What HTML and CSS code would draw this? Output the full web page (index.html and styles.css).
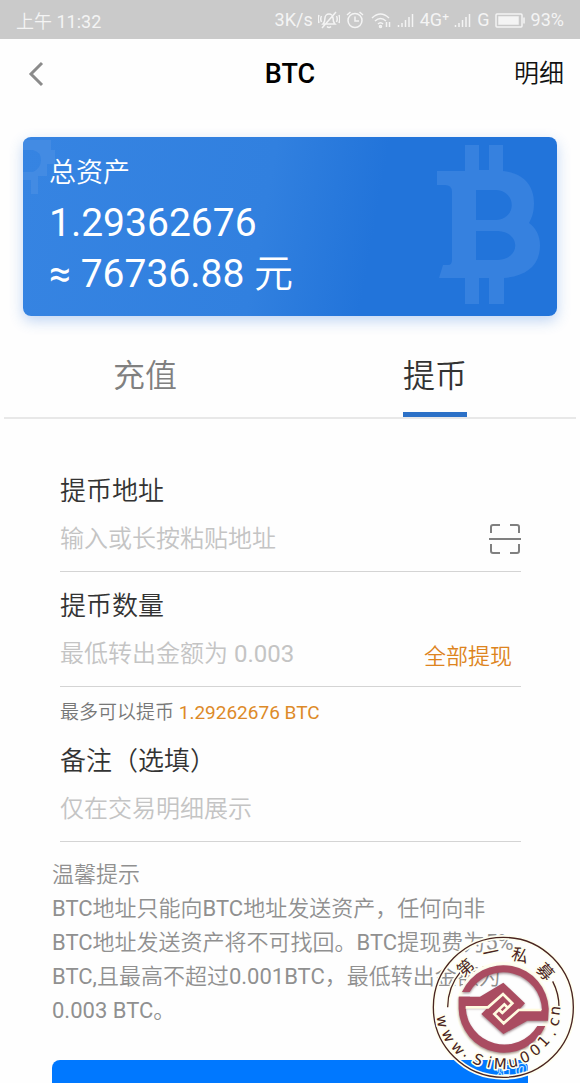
FILE: index.html
```html
<!DOCTYPE html>
<html lang="zh-CN">
<head>
<meta charset="utf-8">
<meta name="viewport" content="width=device-width, initial-scale=1">
<title>BTC</title>
<link rel="stylesheet" href="styles.css">
</head>
<body>
<div class="screen">
  <div class="status">
    <span class="status-time">上午 11:32</span>
    <div class="status-right">
      <span>3K/s</span>
      <svg class="ico" width="22" height="20" viewBox="0 0 22 20"><path d="M5 14c2-2 2-4 2-6a4 4 0 0 1 8 0c0 2 0 4 2 6zM9 16.500q2 2 4 0M4 18 18 2M3.500 6q-1.500 3 0 6M1 5q-1.500 4 0 8M18.500 6q1.500 3 0 6M21 5q1.500 4 0 8"/></svg>
      <svg class="ico" width="20" height="20" viewBox="0 0 20 20"><circle cx="10" cy="10.500" r="7"/><path d="M10 6.500v4.500h4M2 5l3.500-3M18 5l-3.500-3"/></svg>
      <svg class="ico" width="22" height="20" viewBox="0 0 22 20"><path d="M2 8q8.500-8 17 0M5 11q5.500-5 11 0M8 14q2.500-2.500 5 0M16.500 12v5M19.500 12v5"/><circle cx="10.500" cy="16.500" r="1"/></svg>
      <svg class="ico" width="18" height="20" viewBox="0 0 18 20"><path d="M1.500 15v2M5 13v4M8.500 10v7M12 7v10M15.500 4v13"/></svg>
      <span>4G⁺</span>
      <svg class="ico" width="18" height="20" viewBox="0 0 18 20"><path d="M1.500 15v2M5 13v4M8.500 10v7M12 7v10M15.500 4v13"/></svg>
      <span>G</span>
      <svg class="ico" width="31" height="20" viewBox="0 0 31 20"><rect x="1" y="4" width="26" height="13" rx="1"/><rect x="4" y="7" width="19" height="7" fill="#f4f4f4"/><path d="M29 7.500v6"/></svg>
      <span>93%</span>
    </div>
  </div>

  <header class="bar">
    <button class="back" aria-label="返回"><svg width="16" height="26" viewBox="0 0 16 26"><path d="M14 2 3 13l11 11" fill="none" stroke="#8b8b8b" stroke-width="3"/></svg></button>
    <h1 class="title">BTC</h1>
    <a class="detail" href="#detail">明细</a>
  </header>

  <section class="card">
    <svg class="coin" width="104" height="160" viewBox="0 0 104 160" aria-hidden="true"><path fill-rule="evenodd" d="M28 0h14v25h10V0h14v26c20 2 31 14 31 32 0 11-3 16-5 20 7 5 11 13 11 22 0 21-14 31-36 33v26H52v-26H42v26H28v-26H2l4-13h5q4 0 4-5V47q0-7-7-7H0V26h28zM39 45v30h20c21-1 21-29 0-30zM39 86v29h22c23-1 23-28 0-29z"/></svg>
    <svg class="coin-edge" width="34" height="58" viewBox="0 0 34 58" aria-hidden="true"><path d="M0 3h28v10h4v14h-8v12h-9v18H8V43H0V35h10q8-4 8-12t-8-10H0z"/></svg>
    <p class="card-label">总资产</p>
    <p class="amount">1.29362676</p>
    <p class="amount">≈ 76736.88 元</p>
  </section>

  <nav class="tabs">
    <button class="tab">充值</button>
    <button class="tab tab-on">提币</button>
  </nav>

  <form class="form">
    <div class="field">
      <label class="label" for="address">提币地址</label>
      <div class="row">
        <input class="input" id="address" type="text" placeholder="输入或长按粘贴地址">
        <button class="scan" type="button" aria-label="扫描"><svg width="32" height="32" viewBox="0 0 32 32"><path d="M2 10V4q0-2 2-2h7M21 2h7q2 0 2 2v6M2 21v7q0 2 2 2h7M21 30h7q2 0 2-2v-7M0 16h32" fill="none" stroke="#808080" stroke-width="2"/></svg></button>
      </div>
    </div>
    <div class="field">
      <label class="label" for="quantity">提币数量</label>
      <div class="row">
        <input class="input" id="quantity" type="text" placeholder="最低转出金额为 0.003">
        <button class="all" type="button">全部提现</button>
      </div>
    </div>
    <p class="hint">最多可以提币 <span class="hint-value">1.29262676 BTC</span></p>
    <div class="field">
      <label class="label" for="remark">备注（选填）</label>
      <div class="row">
        <input class="input" id="remark" type="text" placeholder="仅在交易明细展示">
      </div>
    </div>
  </form>

  <section class="note">
    <h2 class="note-line">温馨提示</h2>
    <p class="note-line">BTC地址只能向BTC地址发送资产，任何向非<br>BTC地址发送资产将不可找回。BTC提现费为5%<br>BTC,且最高不超过0.001BTC，最低转出金额为<br>0.003 BTC。</p>
  </section>

  <button class="submit" aria-label="提币"><span class="tag">贴 @</span></button>

  <svg class="seal" width="160" height="158" viewBox="0 0 480 474">
    <circle class="halo" cx="250" cy="247" r="210"/>
    <circle class="line" cx="250" cy="247" r="210"/>
    <path class="halo" d="M83 247A167 167 0 0 1 122 140M417 247A167 167 0 0 0 398 169"/>
    <path class="line" d="M83 247A167 167 0 0 1 122 140M417 247A167 167 0 0 0 398 169"/>
    <circle class="halo" cx="250" cy="251" r="134"/>
    <g class="emblem">
      <path d="M126 201A136 136 0 0 1 386 251L384 287H322L250 327 184 267 204 247H120L117 215H180L250 173 315 235 296 255H366A116 116 0 0 0 149 201Z"/>
      <path d="M116 215V251A136 136 0 0 0 376 303H352A116 116 0 0 1 137 247L150 215Z"/>
    </g>
    <path class="groove" d="M137 247H204L249 207 277 235 247 264 238 255M364 255H296L251 295 223 267 253 238 262 247"/>
    <g class="glyphs cjk">
      <text transform="translate(136 128) rotate(-42)" y="18">第</text>
      <text transform="translate(213 82) rotate(-12)" y="18">一</text>
      <text transform="translate(300 91) rotate(15)" y="18">私</text>
      <text transform="translate(376 140) rotate(48)" y="18">募</text>
    </g>
    <text class="glyphs" x="68 82 109 134 169 205 240 282 322 358 387 411 424 432" y="273 322 365 390 412 426 431 428 416 396 370 336 307 273" rotate="82 66 50 39 26 14 3 -10 -23 -36 -48 -61 -71 -82">www.SiMu001.cn</text>
  </svg>
</div>
</body>
</html>
```
FILE: styles.css
```css
* { box-sizing: border-box; }
body, h1, h2, p { margin: 0; font-weight: 400; }
body {
  background: #fefefe;
  font-family: Roboto, "Noto Sans CJK SC DemiLight", "Noto Sans CJK SC Light", "Noto Sans CJK SC", sans-serif;
  color: #333;
}
button {
  padding: 0;
  border: 0;
  background: none;
  font-family: inherit;
  color: inherit;
}
svg { display: block; }
.screen {
  position: relative;
  height: 100vh;
  overflow: hidden;
  display: flex;
  flex-direction: column;
}
.screen > * { flex-shrink: 0; }

.status {
  height: 39px;
  padding: 0 16px;
  display: flex;
  align-items: center;
  justify-content: space-between;
  background: #cacaca;
  color: #f4f4f4;
  font-size: 18px;
}
.status-right { display: flex; align-items: center; gap: 5px; }
.ico { fill: none; stroke: #f4f4f4; stroke-width: 1.5; }

.bar {
  height: 70px;
  padding: 0 16px;
  display: grid;
  grid-template-columns: 1fr auto 1fr;
  align-items: center;
  color: #000;
}
.back { justify-self: start; padding: 0 12px; }
.title { font-size: 27px; font-weight: 500; line-height: 36px; }
.detail { justify-self: end; font-size: 25px; line-height: 36px; color: #111; text-decoration: none; }

.card {
  position: relative;
  margin: 28px 23px 0;
  padding: 16px 26px;
  height: 179px;
  border-radius: 8px;
  background: linear-gradient(100deg, #3684e2 0%, #3180df 45%, #2274da 65%, #2274da 100%);
  box-shadow: 0 5px 14px rgba(50, 120, 220, 0.3);
  color: #fff;
  overflow: hidden;
}
.coin { position: absolute; right: 16px; top: 8px; fill: #3681df; }
.coin-edge { position: absolute; left: 0; top: 0; fill: #438be3; }
.card-label { position: relative; margin-bottom: 5px; font-size: 27px; line-height: 40px; }
.amount { font-size: 39px; line-height: 51px; }

.tabs {
  margin-top: 18px;
  height: 85px;
  padding-bottom: 2px;
  display: grid;
  grid-template-columns: 1fr 1fr;
  justify-items: center;
  background: linear-gradient(#e8e8e8, #e8e8e8) center bottom / calc(100% - 8px) 2px no-repeat;
}
.tab { padding-bottom: 1px; border-bottom: 5px solid transparent; font-size: 32px; color: #808080; }
.tab-on { border-bottom-color: #2c71c7; color: #333; }

.form { padding: 52px 59px 0 60px; }
.field { border-bottom: 1px solid #d4d4d4; margin-bottom: 14px; }
.label { display: block; font-size: 26px; line-height: 40px; }
.row { height: 60px; display: flex; align-items: center; padding-bottom: 4px; }
.input {
  flex: 1;
  min-width: 0;
  padding: 0;
  border: 0;
  outline: 0;
  background: none;
  font-family: inherit;
  font-size: 24px;
  color: #333;
}
.input::placeholder { color: #c4c4c4; }
.all { padding-right: 9px; font-size: 22px; color: #dd8420; }
.hint { margin-bottom: 16px; font-size: 19px; line-height: 24px; color: #777; }
.hint-value { color: #dd8a28; }

.note { padding: 2px 40px 0 52px; color: #909090; }
.note-line { font-size: 22px; line-height: 34px; }

.submit {
  position: relative;
  margin: 32px 52px 0;
  height: 68px;
  border-radius: 8px;
  background: #0078ff;
}
.tag { position: absolute; right: 0; top: 0; font-size: 15px; line-height: 18px; color: #cdeaff; }

.seal { position: absolute; right: 0; bottom: 0; }
.halo { fill: none; stroke: #fffff0; stroke-width: 14; }
.line { fill: none; stroke: #4a2420; stroke-width: 4; }
.emblem { fill: #aa4c61; filter: drop-shadow(0 4px 3px rgba(60, 20, 30, 0.5)); }
.groove { fill: none; stroke: #fffbe0; stroke-width: 8; }
.glyphs {
  font-family: "DejaVu Sans", sans-serif;
  font-size: 45px;
  text-anchor: middle;
  fill: #4a2420;
  stroke: #fffff0;
  stroke-width: 10;
  stroke-linejoin: round;
  paint-order: stroke;
}
.cjk { font-family: "Noto Sans CJK SC", sans-serif; font-size: 50px; }
```
